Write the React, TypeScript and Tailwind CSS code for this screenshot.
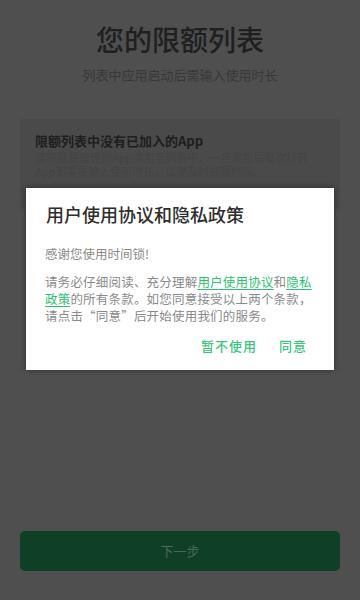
import React from 'react';

const font = { fontFamily: '"Noto Sans CJK SC", "Noto Sans", sans-serif' };

export default function App() {
  return (
    <div className="relative w-[360px] h-[600px] bg-[#4f4f4f] overflow-hidden" style={font}>
      <div className="flex flex-col items-center pt-[21px]">
        <h1 className="text-[28px] leading-[36px] font-medium text-[#202020]">您的限额列表</h1>
        <p className="mt-[9px] text-[13px] leading-[18px] text-[#383838]">列表中应用启动后需输入使用时长</p>
      </div>

      <div className="mx-[20px] mt-[35px] h-[90px] bg-[#4a4a4a] px-[15px] pt-[13px]">
        <div className="text-[13px] leading-[18px] font-bold text-[#1e1e1e]">限额列表中没有已加入的App</div>
        <div className="text-[11px] leading-[14px] text-[#444444]">
          请将需要管理的App添加至列表中，一旦添加后每次打开App都需要输入使用时长，以便及时提醒时间。
        </div>
      </div>

      <div className="absolute left-[20px] right-[20px] top-[531px] h-[40px] rounded-[5px] bg-[#0f3f25] flex items-center justify-center">
        <span className="text-[13px] text-[#4c6a58]">下一步</span>
      </div>

      <div className="absolute left-[26px] right-[26px] top-[188px] h-[182px] bg-white shadow-[0_0_6px_rgba(0,0,0,0.4)] px-[19px] pt-[14px]">
        <div className="text-[18px] leading-[24px] text-[#2e2e2e] font-medium pl-[1px]">用户使用协议和隐私政策</div>
        <p className="mt-[19px] text-[12.5px] leading-[17px] text-[#8a8a8a]">感谢您使用时间锁!</p>
        <p className="mt-[11px] text-[12.5px] leading-[17px] text-[#8a8a8a] tracking-[0.2px]">
          请务必仔细阅读、充分理解<span className="text-[#2fbf72] underline underline-offset-2">用户使用协议</span>和<span className="text-[#2fbf72] underline underline-offset-2">隐私政策</span>的所有条款。如您同意接受以上两个条款，请点击“同意”后开始使用我们的服务。
        </p>
        <div className="mt-[12px] flex justify-end gap-[22px] pr-[8px] text-[13px] font-medium text-[#3cc47e] tracking-[1px]">
          <span>暂不使用</span>
          <span>同意</span>
        </div>
      </div>
    </div>
  );
}
